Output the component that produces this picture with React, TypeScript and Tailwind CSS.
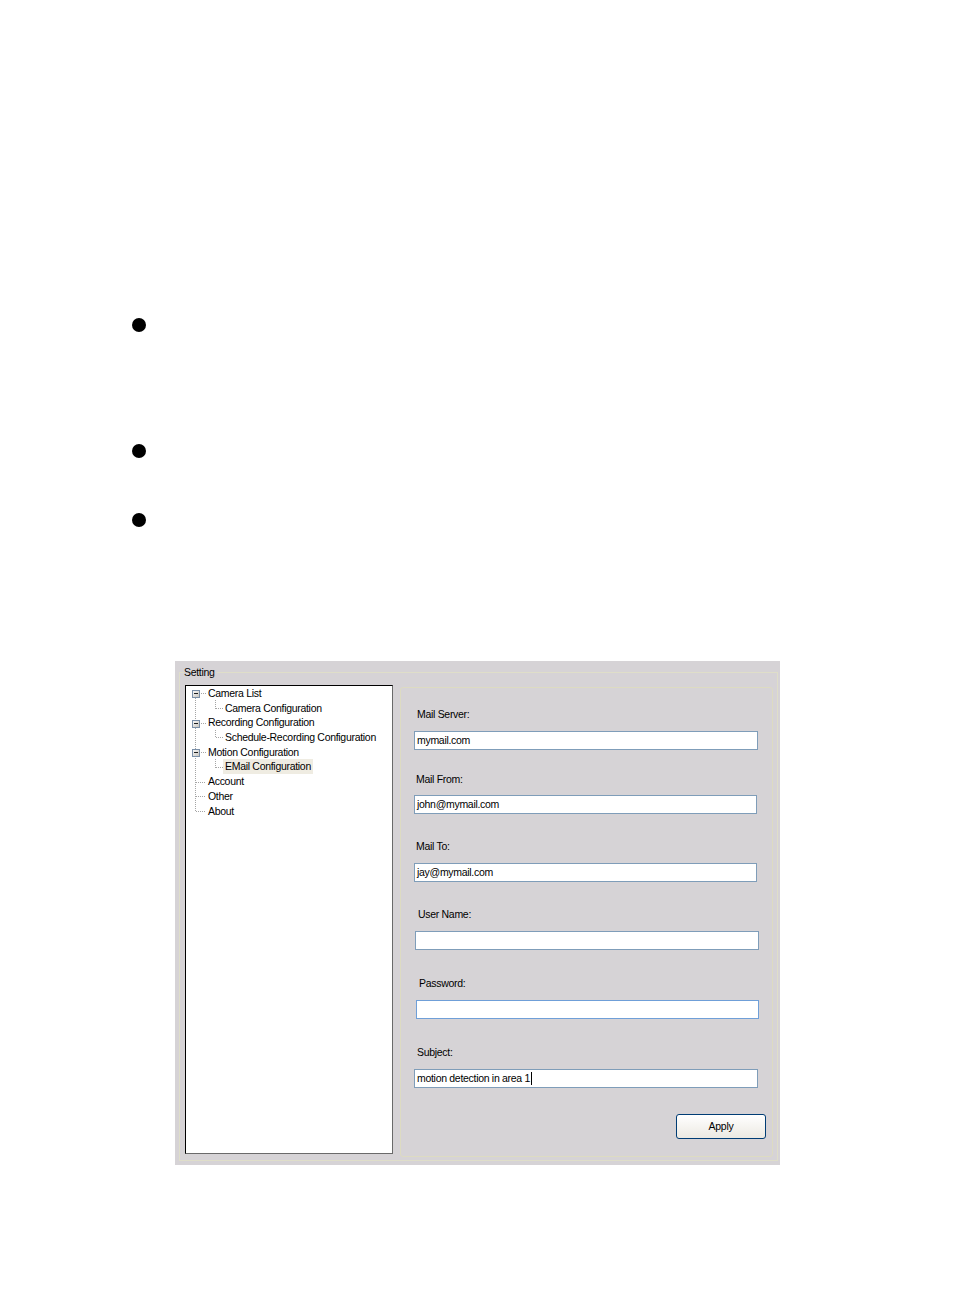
import React from "react";

const font = "font-['Liberation_Sans',Arial,sans-serif] text-[10.5px] tracking-[-0.3px] text-black";

type Field = { label: string; value: string; lx: string; ix: string; w: string; lmt: string; imt: string; border: string; caret?: boolean };

const fields: Field[] = [
  { label: "Mail Server:", value: "mymail.com", lx: "ml-[16px]", ix: "ml-[13px]", w: "w-[344px]", lmt: "mt-[20px]", imt: "mt-[10px]", border: "border-[#7f9db9]" },
  { label: "Mail From:", value: "john@mymail.com", lx: "ml-[15px]", ix: "ml-[13px]", w: "w-[343px]", lmt: "mt-[23px]", imt: "mt-[9px]", border: "border-[#7f9db9]" },
  { label: "Mail To:", value: "jay@mymail.com", lx: "ml-[15px]", ix: "ml-[13px]", w: "w-[343px]", lmt: "mt-[26px]", imt: "mt-[10px]", border: "border-[#7f9db9]" },
  { label: "User Name:", value: "", lx: "ml-[17px]", ix: "ml-[14px]", w: "w-[344px]", lmt: "mt-[26px]", imt: "mt-[10px]", border: "border-[#7f9db9]" },
  { label: "Password:", value: "", lx: "ml-[18px]", ix: "ml-[15px]", w: "w-[343px]", lmt: "mt-[27px]", imt: "mt-[10px]", border: "border-[#6f9fd8]" },
  { label: "Subject:", value: "motion detection in area 1", lx: "ml-[16px]", ix: "ml-[13px]", w: "w-[344px]", lmt: "mt-[27px]", imt: "mt-[10px]", border: "border-[#7f9db9]", caret: true },
];

type Node = { text: string; level: 0 | 1; sel?: boolean };
const nodes: Node[] = [
  { text: "Camera List", level: 0 },
  { text: "Camera Configuration", level: 1 },
  { text: "Recording Configuration", level: 0 },
  { text: "Schedule-Recording Configuration", level: 1 },
  { text: "Motion Configuration", level: 0 },
  { text: "EMail Configuration", level: 1, sel: true },
  { text: "Account", level: 0 },
  { text: "Other", level: 0 },
  { text: "About", level: 0 },
];

const RH = 14.7;

function TreeLines() {
  const c = (i: number) => Math.round(i * RH + RH / 2) + 0.5;
  const dot = { stroke: "#a5a5a5", strokeWidth: 1, strokeDasharray: "1 1", shapeRendering: "crispEdges" as const };
  const boxes = [0, 2, 4];
  const leaves = [6, 7, 8];
  const children = [1, 3, 5];
  return (
    <svg className="absolute left-0 top-0" width="206" height="200">
      <line x1="9.5" y1={c(0)} x2="9.5" y2={c(8)} {...dot} />
      {boxes.map((i) => (
        <line key={"h" + i} x1="13" y1={c(i)} x2="20" y2={c(i)} {...dot} />
      ))}
      {leaves.map((i) => (
        <line key={"l" + i} x1="10" y1={c(i)} x2="20" y2={c(i)} {...dot} />
      ))}
      {children.map((i) => (
        <g key={"c" + i}>
          <line x1="29.5" y1={c(i - 1) + 6} x2="29.5" y2={c(i)} {...dot} />
          <line x1="30" y1={c(i)} x2="37" y2={c(i)} {...dot} />
        </g>
      ))}
      {boxes.map((i) => (
        <g key={"b" + i} shapeRendering="crispEdges">
          <defs>
            <linearGradient id={"g" + i} x1="0" y1="0" x2="1" y2="1">
              <stop offset="0" stopColor="#ffffff" />
              <stop offset="1" stopColor="#c6c3bd" />
            </linearGradient>
          </defs>
          <rect x="6.5" y={c(i) - 3.5} width="7" height="7" fill={`url(#g${i})`} stroke="#7a8fa8" />
          <line x1="8" y1={c(i)} x2="12" y2={c(i)} stroke="#1f1f1f" />
        </g>
      ))}
    </svg>
  );
}

export default function App() {
  return (
    <div className={`min-h-[1311px] w-[954px] bg-white flex flex-col ${font}`}>
      <div className="ml-[132px] mt-[318px] w-[14px] h-[14px] rounded-full bg-black" />
      <div className="ml-[132px] mt-[112px] w-[14px] h-[14px] rounded-full bg-black" />
      <div className="ml-[132px] mt-[55px] w-[14px] h-[14px] rounded-full bg-black" />

      <div className="ml-[175px] mt-[134px] w-[605px] h-[504px] bg-[#d6d3d6] pt-[5px] pl-[4px]">
        <fieldset className="w-[599px] border border-[#dfdec9] pb-[3px]">
          <legend className="ml-[4px] h-[13px] leading-[13px] pr-[2px]">Setting</legend>
          <div className="flex items-start">
            <div className="ml-[5px] mt-[6px] w-[208px] h-[469px] bg-white border border-t-black border-l-black border-r-[#6a6a6a] border-b-[#6a6a6a] relative">
              <TreeLines />
              <div className="relative flex flex-col">
                {nodes.map((n) => (
                  <div key={n.text} className="h-[14.7px] leading-[14.7px] flex">
                    <span
                      className={`${n.level === 0 ? "ml-[20px]" : "ml-[37px]"} px-[2px] whitespace-nowrap ${n.sel ? "bg-[#efece2]" : ""}`}
                    >
                      {n.text}
                    </span>
                  </div>
                ))}
              </div>
            </div>

            <div className="ml-[7px] mt-[8px] w-[373px] h-[470px] border border-[#dddbc2] rounded-[3px] flex flex-col">
              {fields.map((f) => (
                <div key={f.label} className="flex flex-col">
                  <div className={`${f.lmt} ${f.lx} h-[13px] leading-[13px]`}>{f.label}</div>
                  <div className={`${f.imt} ${f.ix} ${f.w} h-[19px] bg-white border ${f.border} pl-[2px] leading-[17px] flex items-center`}>
                    <span className="whitespace-nowrap">{f.value}</span>
                    {f.caret && <span className="ml-[1px] w-[1px] h-[13px] bg-black" />}
                  </div>
                </div>
              ))}
              <button className="mt-[26px] ml-[275px] w-[90px] h-[25px] rounded-[3px] border border-[#003c74] bg-gradient-to-b from-white to-[#ece9e2] flex items-center justify-center">
                Apply
              </button>
            </div>
          </div>
        </fieldset>
      </div>
    </div>
  );
}
